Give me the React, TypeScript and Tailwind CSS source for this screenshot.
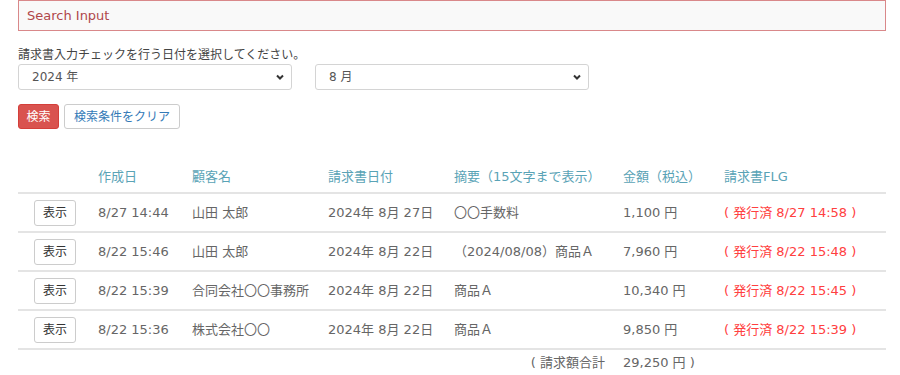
import React from "react";

const font = { fontFamily: '"DejaVu Sans", "Noto Sans CJK JP", sans-serif' };

const rows = [
  { created: "8/27 14:44", customer: "山田 太郎", date: "2024年 8月 27日", summary: "〇〇手数料", amount: "1,100 円", flg: "( 発行済 8/27 14:58 )" },
  { created: "8/22 15:46", customer: "山田 太郎", date: "2024年 8月 22日", summary: "（2024/08/08）商品Ａ", amount: "7,960 円", flg: "( 発行済 8/22 15:48 )" },
  { created: "8/22 15:39", customer: "合同会社〇〇事務所", date: "2024年 8月 22日", summary: "商品Ａ", amount: "10,340 円", flg: "( 発行済 8/22 15:45 )" },
  { created: "8/22 15:36", customer: "株式会社〇〇", date: "2024年 8月 22日", summary: "商品Ａ", amount: "9,850 円", flg: "( 発行済 8/22 15:39 )" },
];

function Chevron() {
  return (
    <svg className="w-2.5 h-2.5 text-[#333]" viewBox="0 0 10 10" fill="none" stroke="currentColor" strokeWidth={2}>
      <path d="M2 3.5l3 3 3-3" />
    </svg>
  );
}

function Select({ value }: { value: string }) {
  return (
    <div className="w-[274px] h-[26px] border border-[#d4d4d4] rounded-[3px] bg-white flex items-center justify-between pl-[13px] pr-[6px]">
      <span className="text-[12px] text-[#555]">{value}</span>
      <Chevron />
    </div>
  );
}

export default function App() {
  return (
    <div className="w-[900px] h-[375px] bg-white overflow-hidden" style={font}>
      <div className="mx-[18px] w-[868px]">
        <div className="h-[31px] border border-[#d9888a] bg-[#f9f9f9] flex items-center pl-[8px] text-[13px] text-[#b0474a]">
          Search Input
        </div>

        <p className="mt-[15px] text-[12px] text-[#444] leading-[18px]">
          請求書入力チェックを行う日付を選択してください。
        </p>
        <div className="flex gap-[23px]">
          <Select value="2024 年" />
          <Select value="8 月" />
        </div>

        <div className="mt-[14px] flex gap-[5px]">
          <button className="h-[25px] w-[41px] rounded-[3px] bg-[#d9534f] border border-[#d43f3a] text-white text-[12px]">
            検索
          </button>
          <button className="h-[25px] px-[9px] rounded-[3px] bg-white border border-[#ccc] text-[#337ab7] text-[12px]">
            検索条件をクリア
          </button>
        </div>

        <table className="mt-[33px] w-full text-[13px] border-collapse">
          <thead>
            <tr className="h-[31px] border-b-2 border-[#e4e4e4] text-[#5aa3b6] text-left">
              <th className="w-[80px] font-normal"></th>
              <th className="w-[94px] font-normal">作成日</th>
              <th className="w-[136px] font-normal">顧客名</th>
              <th className="w-[126px] font-normal">請求書日付</th>
              <th className="w-[169px] font-normal">摘要（15文字まで表示）</th>
              <th className="w-[101px] font-normal">金額（税込）</th>
              <th className="font-normal">請求書FLG</th>
            </tr>
          </thead>
          <tbody className="text-[#666]">
            {rows.map((r, i) => (
              <tr key={i} className="h-[39px] border-b-2 border-[#e4e4e4]">
                <td className="pl-[16px]">
                  <button className="h-[26px] w-[42px] rounded-[3px] bg-white border border-[#ccc] text-[#333] text-[12px]">
                    表示
                  </button>
                </td>
                <td>{r.created}</td>
                <td>{r.customer}</td>
                <td>{r.date}</td>
                <td>{r.summary}</td>
                <td>{r.amount}</td>
                <td className="text-[#ff4040]">{r.flg}</td>
              </tr>
            ))}
            <tr className="h-[27px]">
              <td colSpan={4}></td>
              <td className="text-right pr-[18px]">( 請求額合計</td>
              <td colSpan={2}>29,250 円 )</td>
            </tr>
          </tbody>
        </table>
      </div>
    </div>
  );
}
